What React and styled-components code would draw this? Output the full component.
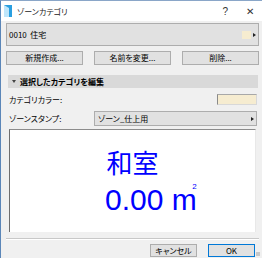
import React from "react";
import styled, { createGlobalStyle } from "styled-components";

const Global = createGlobalStyle`
  html, body {
    margin: 0;
    padding: 0;
    background: #f0f0f0;
  }
  body {
    font-family: "Noto Sans CJK JP", "Liberation Sans", sans-serif;
    font-feature-settings: "palt";
    font-size: 8px;
    color: #000;
  }
`;

const Window = styled.div`
  width: 262px;
  height: 258px;
  box-sizing: border-box;
  border-left: 1px solid #5b86b8;
  border-top: 1px solid #8aa6c8;
  background: #f0f0f0;
  display: flex;
  flex-direction: column;
  overflow: hidden;
  position: relative;
`;

const TitleBar = styled.div`
  height: 20px;
  background: #fff;
  display: flex;
  align-items: center;
  padding-left: 3px;
  flex-shrink: 0;
`;

const TitleText = styled.span`
  margin-left: 5px;
  font-size: 8px;
  color: #222;
`;

const TitleButtons = styled.div`
  margin-left: auto;
  display: flex;
  align-items: center;
  gap: 18px;
  padding-right: 8px;
  font-family: "Liberation Sans", sans-serif;
  font-size: 10px;
  color: #333;
`;

const Body = styled.div`
  flex: 1;
  display: flex;
  flex-direction: column;
  padding: 1px 3px 0 5px;
`;

const Popup = styled.div`
  box-sizing: border-box;
  height: ${(p) => p.h}px;
  background: #e1e1e1;
  border: 1px solid #adadad;
  display: flex;
  align-items: center;
  padding: 0 2px 0 ${(p) => p.pl || 2}px;
  flex: ${(p) => (p.grow ? 1 : "none")};
`;

const PopupText = styled.span`
  flex: 1;
  white-space: nowrap;
`;

const Swatch = styled.span`
  width: ${(p) => p.w}px;
  height: ${(p) => p.hh}px;
  background: #f6ecd0;
  box-sizing: border-box;
  border-left: ${(p) => (p.framed ? "1px solid #8a8a8a" : "none")};
  border-top: ${(p) => (p.framed ? "1px solid #a8a8a8" : "none")};
  border-right: ${(p) => (p.framed ? "1px solid #d8d8d8" : "none")};
  border-bottom: ${(p) => (p.framed ? "1px solid #d8d8d8" : "none")};
`;

const Arrow = styled.span`
  width: 0;
  height: 0;
  margin-left: 2px;
  border-top: 2px solid transparent;
  border-bottom: 2px solid transparent;
  border-left: 3px solid #222;
`;

const ButtonRow = styled.div`
  display: grid;
  grid-template-columns: 77px 77px 77px;
  column-gap: 11px;
  margin-top: 5px;
`;

const Button = styled.button`
  box-sizing: border-box;
  height: ${(p) => p.h || 14}px;
  width: ${(p) => (p.w ? p.w + "px" : "auto")};
  background: #e1e1e1;
  border: 1px solid ${(p) => (p.primary ? "#0078d7" : "#adadad")};
  font-family: "Noto Sans CJK JP", "Liberation Sans", sans-serif;
  font-feature-settings: "palt";
  font-size: 8px;
  padding: 0;
  line-height: 1;
  color: #000;
`;

const SectionHeader = styled.div`
  margin: 10px 1px 0 2px;
  height: 13px;
  background: #d9d9d9;
  display: flex;
  align-items: center;
  padding-left: 4px;
  font-weight: bold;
  gap: 4px;
`;

const DownArrow = styled.span`
  width: 0;
  height: 0;
  border-left: 2px solid transparent;
  border-right: 2px solid transparent;
  border-top: 3px solid #444;
`;

const FieldRow = styled.div`
  display: flex;
  align-items: center;
  margin-top: ${(p) => p.mt}px;
  padding-left: 3px;
  padding-right: 2px;
`;

const Label = styled.span`
  width: 85px;
  white-space: nowrap;
`;

const Preview = styled.div`
  margin: 3px 3px 0 3px;
  height: 103px;
  box-sizing: border-box;
  background: #fff;
  border-top: 1px solid #8c8c8c;
  border-left: 1px solid #6e6e6e;
  border-right: 1px solid #e8e8e8;
  display: flex;
  flex-direction: column;
  color: #0000ff;
`;

const ZoneName = styled.div`
  margin-top: 17px;
  align-self: center;
  font-size: 26px;
  line-height: 30px;
  font-feature-settings: normal;
`;

const Area = styled.div`
  margin-top: 8px;
  padding-left: 95px;
  font-family: "Liberation Sans", sans-serif;
  font-size: 30px;
  line-height: 30px;
  white-space: nowrap;
`;

const Unit = styled.span`
  position: relative;
`;

const Sup = styled.span`
  position: absolute;
  right: 0;
  top: 0;
  font-size: 8px;
  line-height: 8px;
`;

const Separator = styled.div`
  margin-top: 6px;
  height: 1px;
  background: #c8c8c8;
  border-bottom: 1px solid #fff;
`;

const Footer = styled.div`
  display: flex;
  justify-content: flex-end;
  gap: 11px;
  margin-top: 4px;
  padding-right: 4px;
`;

const Grip = styled.div`
  position: absolute;
  right: 2px;
  bottom: 2px;
  width: 4px;
  height: 4px;
  background: radial-gradient(circle, #999 0.6px, transparent 0.8px) 0 0 / 2px 2px;
`;

const ZoneIcon = () => (
  <svg width="8" height="12" viewBox="0 0 8 12">
    <rect x="0" y="0" width="8" height="12" fill="#2a9fe0" />
    <path d="M0 0 L5 3 L5 12 L0 12 Z" fill="#bfe6fb" />
  </svg>
);

export default function App() {
  return (
    <>
      <Global />
      <Window>
        <TitleBar>
          <ZoneIcon />
          <TitleText>ゾーンカテゴリ</TitleText>
          <TitleButtons>
            <span>?</span>
            <span>✕</span>
          </TitleButtons>
        </TitleBar>
        <Body>
          <Popup h={23} style={{ marginTop: 1 }}>
            <PopupText>0010&nbsp;&nbsp;住宅</PopupText>
            <Swatch w={9} hh={8} />
            <Arrow />
          </Popup>
          <ButtonRow>
            <Button>新規作成...</Button>
            <Button>名前を変更...</Button>
            <Button>削除...</Button>
          </ButtonRow>
          <SectionHeader>
            <DownArrow />
            選択したカテゴリを編集
          </SectionHeader>
          <FieldRow mt={6}>
            <Label>カテゴリカラー:</Label>
            <span style={{ flex: 1 }} />
            <Swatch w={40} hh={11} framed />
          </FieldRow>
          <FieldRow mt={6}>
            <Label>ゾーンスタンプ:</Label>
            <Popup h={15} grow pl={3}>
              <PopupText>ゾーン_仕上用</PopupText>
              <Arrow />
            </Popup>
          </FieldRow>
          <Preview>
            <ZoneName>和室</ZoneName>
            <Area>
              0.00 <Unit>m<Sup>2</Sup></Unit>
            </Area>
          </Preview>
          <Separator />
          <Footer>
            <Button w={47} h={13}>キャンセル</Button>
            <Button w={47} h={13} primary>OK</Button>
          </Footer>
        </Body>
        <Grip />
      </Window>
    </>
  );
}
